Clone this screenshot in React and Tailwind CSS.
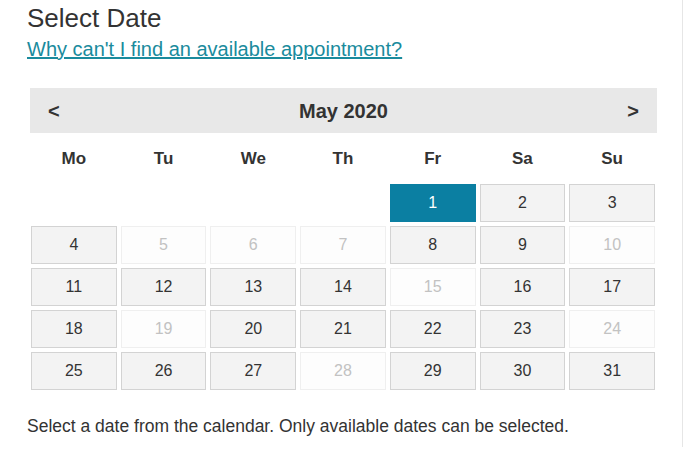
import React from "react";

const days = ["Mo", "Tu", "We", "Th", "Fr", "Sa", "Su"];
const unavailable = [5, 6, 7, 10, 15, 19, 24, 28];
const selected = 1;
// May 2020 starts on a Friday
const offset = 4;

function DayCell({ day }) {
  if (!day) return <div className="h-[38px]" />;
  if (day === selected) {
    return (
      <button className="h-[38px] flex justify-center items-center bg-[#0b7fa2] border border-[#0b7fa2] text-white text-[16px]">
        {day}
      </button>
    );
  }
  if (unavailable.includes(day)) {
    return (
      <div className="h-[38px] flex justify-center items-center bg-[#fdfdfd] border border-[#efefef] text-[#c2c2c2] text-[16px]">
        {day}
      </div>
    );
  }
  return (
    <button className="h-[38px] flex justify-center items-center bg-[#f3f3f3] border border-[#d3d3d3] text-[#333333] text-[16px]">
      {day}
    </button>
  );
}

export default function App() {
  const cells = [];
  for (let i = 0; i < offset; i++) cells.push(null);
  for (let d = 1; d <= 31; d++) cells.push(d);

  return (
    <div
      className="w-[683px] h-[447px] border-r border-[#e6e6e6] bg-white pt-[3px] pl-[27px]"
      style={{ fontFamily: '"Liberation Sans", Arial, sans-serif' }}
    >
      <h1 className="text-[26px] leading-[30px] text-[#333333]">Select Date</h1>
      <a
        href="#"
        className="block mt-[4px] text-[20px] leading-[24px] text-[#1a8b9d] underline w-fit"
      >
        Why can't I find an available appointment?
      </a>

      <div className="mt-[27px] ml-[3px] w-[627px]">
        <div className="h-[45px] bg-[#e8e8e8] flex justify-between items-center px-[18px] text-[#333333]">
          <button className="text-[20px] font-bold">&lt;</button>
          <span className="text-[20px] font-bold">May 2020</span>
          <button className="text-[20px] font-bold">&gt;</button>
        </div>
        <div className="ml-[1px] w-[624px]">
          <div className="grid grid-cols-7 gap-x-[4px] h-[51px] pt-[1px] items-center">
            {days.map((d) => (
              <div key={d} className="text-center text-[17px] font-bold text-[#333333]">
                {d}
              </div>
            ))}
          </div>
          <div className="grid grid-cols-7 gap-[4px]">
            {cells.map((d, i) => (
              <DayCell key={i} day={d} />
            ))}
          </div>
        </div>
      </div>

      <p className="mt-[24px] text-[17.5px] leading-[24px] text-[#333333]">
        Select a date from the calendar. Only available dates can be selected.
      </p>
    </div>
  );
}
